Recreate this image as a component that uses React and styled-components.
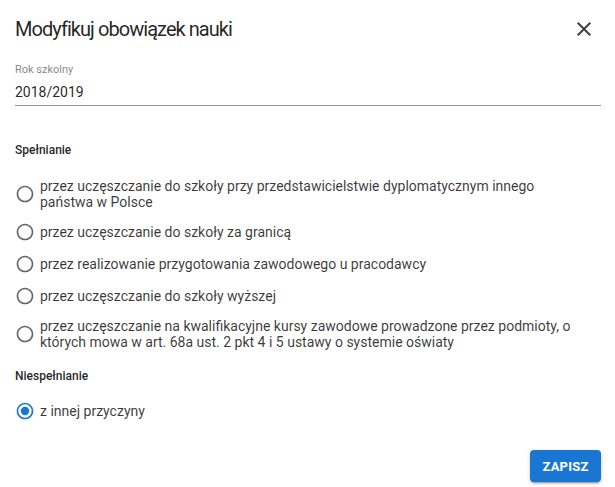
import React from "react";
import styled, { createGlobalStyle } from "styled-components";

const Global = createGlobalStyle`
  html, body { margin: 0; padding: 0; background: #fff; }
  body { font-family: Roboto, "Liberation Sans", Arial, sans-serif; color: rgba(0,0,0,0.87); }
  * { box-sizing: border-box; }
`;

const Dialog = styled.div`
  width: 615px;
  height: 487px;
  display: flex;
  flex-direction: column;
  padding: 13px 14px 0 15px;
`;

const Header = styled.div`
  display: flex;
  align-items: center;
  justify-content: space-between;
  height: 32px;
`;

const Title = styled.h2`
  margin: 0;
  font-size: 20px;
  font-weight: 400;
  letter-spacing: -0.95px;
  line-height: 32px;
  color: rgba(0,0,0,0.87);
`;

const CloseButton = styled.button`
  width: 24px;
  height: 24px;
  margin-right: 5px;
  padding: 0;
  border: 0;
  background: none;
  display: flex;
  align-items: center;
  justify-content: center;
  color: rgba(0,0,0,0.75);
`;

const Field = styled.div`
  margin-top: 18px;
  display: flex;
  flex-direction: column;
  border-bottom: 1px solid #949494;
  padding-bottom: 3px;
`;

const FieldLabel = styled.label`
  font-size: 11px;
  line-height: 14px;
  color: rgba(0,0,0,0.5);
`;

const FieldValue = styled.div`
  margin-top: 5px;
  font-size: 14px;
  line-height: 20px;
  color: rgba(0,0,0,0.87);
`;

const SectionLabel = styled.div`
  font-size: 12px;
  font-weight: 500;
  line-height: 16px;
  color: rgba(0,0,0,0.87);
  margin-top: ${(p) => p.$top}px;
  margin-bottom: ${(p) => p.$bottom}px;
`;

const RadioRow = styled.label`
  display: flex;
  align-items: center;
  min-height: 32px;
  gap: 5px;
  padding: 6px 0;
  cursor: pointer;
`;

const RadioText = styled.span`
  font-size: 14px;
  line-height: 16px;
  color: rgba(0,0,0,0.78);
`;

const IconBox = styled.span`
  width: 20px;
  height: 20px;
  flex: none;
  display: flex;
  color: ${(p) => (p.$checked ? "#1976d2" : "rgba(0,0,0,0.6)")};
`;

const Footer = styled.div`
  margin-top: auto;
  display: flex;
  justify-content: flex-end;
  padding-bottom: 5px;
`;

const SaveButton = styled.button`
  width: 71px;
  height: 32px;
  border: 0;
  border-radius: 4px;
  background: #1976d2;
  color: #fff;
  font-family: Roboto, "Liberation Sans", Arial, sans-serif;
  font-size: 13px;
  font-weight: 700;
  letter-spacing: 0.2px;
  box-shadow: 0 3px 1px -2px rgba(0,0,0,0.2), 0 2px 2px 0 rgba(0,0,0,0.14), 0 1px 5px 0 rgba(0,0,0,0.12);
`;

const RadioIcon = ({ checked }) => (
  <IconBox $checked={checked}>
    <svg width="20" height="20" viewBox="0 0 24 24" fill="currentColor">
      <path d="M12 2C6.48 2 2 6.48 2 12s4.48 10 10 10 10-4.48 10-10S17.52 2 12 2zm0 18c-4.42 0-8-3.58-8-8s3.58-8 8-8 8 3.58 8 8-3.58 8-8 8z" />
      {checked && <circle cx="12" cy="12" r="5" />}
    </svg>
  </IconBox>
);

const Radio = ({ checked, children }) => (
  <RadioRow>
    <RadioIcon checked={checked} />
    <RadioText>{children}</RadioText>
  </RadioRow>
);

const options = [
  <>przez uczęszczanie do szkoły przy przedstawicielstwie dyplomatycznym innego<br />państwa w Polsce</>,
  "przez uczęszczanie do szkoły za granicą",
  "przez realizowanie przygotowania zawodowego u pracodawcy",
  "przez uczęszczanie do szkoły wyższej",
  <>przez uczęszczanie na kwalifikacyjne kursy zawodowe prowadzone przez podmioty, o<br />których mowa w art. 68a ust. 2 pkt 4 i 5 ustawy o systemie oświaty</>,
];

export default function App() {
  return (
    <>
      <Global />
      <Dialog>
        <Header>
          <Title>Modyfikuj obowiązek nauki</Title>
          <CloseButton aria-label="Zamknij">
            <svg width="24" height="24" viewBox="0 0 24 24" fill="currentColor">
              <path d="M19 6.41 17.59 5 12 10.59 6.41 5 5 6.41 10.59 12 5 17.59 6.41 19 12 13.41 17.59 19 19 17.59 13.41 12z" />
            </svg>
          </CloseButton>
        </Header>
        <Field>
          <FieldLabel>Rok szkolny</FieldLabel>
          <FieldValue>2018/2019</FieldValue>
        </Field>
        <SectionLabel $top={36} $bottom={14}>Spełnianie</SectionLabel>
        {options.map((o, i) => (
          <Radio key={i}>{o}</Radio>
        ))}
        <SectionLabel $top={12} $bottom={11}>Niespełnianie</SectionLabel>
        <Radio checked>z innej przyczyny</Radio>
        <Footer>
          <SaveButton>ZAPISZ</SaveButton>
        </Footer>
      </Dialog>
    </>
  );
}
